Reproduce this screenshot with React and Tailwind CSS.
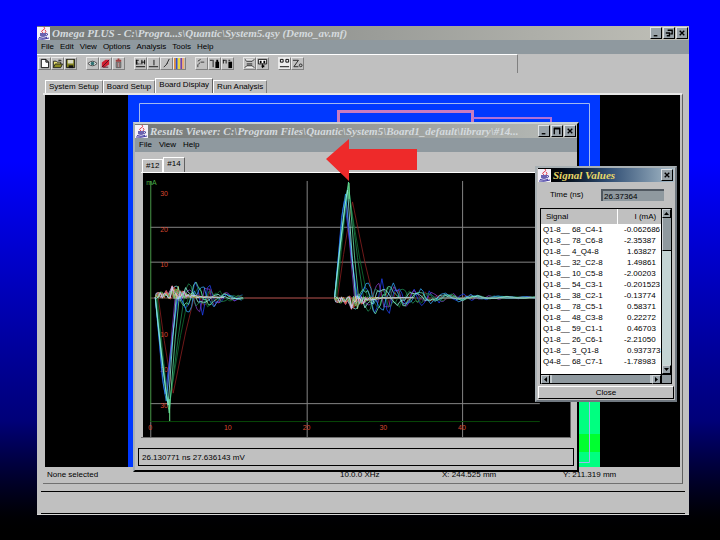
import { useState } from "react";
import clsx from "clsx";

const MENUS = ["File", "Edit", "View", "Options", "Analysis", "Tools", "Help"];
const TABS = ["System Setup", "Board Setup", "Board Display", "Run Analysis"];

const SIGNALS = [
  ["Q1-8__ 68_C4-1", "-0.062686"],
  ["Q1-8__ 78_C6-8", "-2.35387"],
  ["Q1-8__ 4_Q4-8", "1.63827"],
  ["Q1-8__ 32_C2-8", "1.49861"],
  ["Q1-8__ 10_C5-8", "-2.00203"],
  ["Q1-8__ 54_C3-1", "-0.201523"],
  ["Q1-8__ 38_C2-1", "-0.13774"],
  ["Q1-8__ 78_C5-1", "0.58371"],
  ["Q1-8__ 48_C3-8", "0.22272"],
  ["Q1-8__ 59_C1-1", "0.46703"],
  ["Q1-8__ 26_C6-1", "-2.21050"],
  ["Q1-8__ 3_Q1-8", "0.937373"],
  ["Q4-8__ 68_C7-1", "-1.78983"],
];

// icon drawings, each on a 12 x 12 grid
const TOOL_GROUPS = [
  [
    {
      name: "New",
      art: <path d="M2.5 1.5h5l3 3v6h-8zM7.5 1.5v3h3" fill="#fff" stroke="#000" />,
    },
    {
      name: "Open",
      art: (
        <>
          <path d="M1.5 10.5v-7h3l1 1h4v2" fill="#e8e070" stroke="#222" />
          <path d="M1.5 10.5l2-4h8l-2 4z" fill="#8a8a20" stroke="#222" />
          <path d="M7 2.5h2.5l1 1" fill="none" stroke="#000" />
        </>
      ),
    },
    {
      name: "Save",
      art: (
        <>
          <path d="M1.5 1.5h9v9h-9z" fill="#808020" stroke="#111" />
          <path d="M3 2h6v4H3z" fill="#d8d8c0" />
          <path d="M4 8h5v3H4z" fill="#111" />
        </>
      ),
    },
  ],
  [
    {
      name: "Inspect",
      art: (
        <>
          <path d="M1 6q5-5 10 0q-5 5-10 0z" fill="#dfe5e5" stroke="#444" />
          <circle cx="6" cy="6" r="2" fill="#307070" />
        </>
      ),
    },
    {
      name: "Edit net",
      art: (
        <>
          <path d="M2 5l4-3h4v5l-5 3H2z" fill="#d02030" />
          <path d="M2 10l8-8M3 10h6" stroke="#501020" />
        </>
      ),
    },
    {
      name: "Delete",
      art: (
        <>
          <path d="M3.5 4.5h5v6h-5z" fill="#a8a8a8" stroke="#555" />
          <path d="M3 3h6M5 1.5h2" stroke="#a04040" strokeWidth="2" />
          <path d="M5 5v5M7 5v5" stroke="#906060" />
        </>
      ),
    },
  ],
  [
    {
      name: "Fields",
      art: (
        <path d="M1.5 2v5M1 2.5h3M1 4.5h2M1 6.5h3M7.5 2v5M10.5 2v5M7 4.5h4M5 6.5h1M1 9.5h10" stroke="#000" />
      ),
    },
    { name: "Ground", art: <path d="M6.5 2v6M1 9.5h10" stroke="#111" /> },
    { name: "Probe", art: <path d="M3 10l3-3 3-6M6 7l1-1" stroke="#222" fill="none" /> },
    {
      name: "Spectrum",
      art: (
        <>
          <rect x="0" y="0" width="2" height="12" fill="#e09040" />
          <rect x="2" y="0" width="2" height="12" fill="#3050d0" />
          <rect x="4" y="0" width="3" height="12" fill="#e8d840" />
          <rect x="7" y="0" width="2" height="12" fill="#7040b0" />
          <rect x="9" y="0" width="2" height="12" fill="#f0b070" />
        </>
      ),
    },
  ],
  [
    { name: "Route", art: <path d="M2 3.5l3-2M2 10v-3M5 4.5h4M3 7l1-2" stroke="#333" fill="none" /> },
    {
      name: "Driver",
      art: (
        <>
          <path d="M1 2.5h3M4.5 2v8" stroke="#111" />
          <path d="M7 4h4v7H7zM8 2h2v2H8z" fill="#000" />
        </>
      ),
    },
    {
      name: "Receiver",
      art: (
        <>
          <path d="M1 2.5h3M4.5 2v4M1.5 2v4M7 2.5h2" stroke="#111" />
          <path d="M7 4h4v7H7z" fill="#000" />
        </>
      ),
    },
  ],
  [
    {
      name: "Layers",
      art: <path d="M1 1.5l2 2h6l2-2M3 6.5h6M1 10.5l2-2h6l2 2" stroke="#111" fill="#fff" />,
    },
    {
      name: "Connector",
      art: (
        <>
          <path d="M1.5 1.5h9v5h-9zM6 6v5" stroke="#111" fill="#fff" />
          <path d="M3 3h2v3H3zM7 3h2v3H7zM5 8h3v2H5z" fill="#000" />
        </>
      ),
    },
  ],
  [
    {
      name: "Pins",
      art: (
        <>
          <path d="M0 0h12v12H0z" fill="#eee" />
          <path d="M1.5 1.5h3v3h-3zM7.5 1.5h3v3h-3zM1 9.5h10" stroke="#000" fill="none" />
        </>
      ),
    },
    {
      name: "Impedance",
      art: (
        <>
          <path d="M1 2.5h6l-5 7h5" stroke="#222" fill="none" />
          <circle cx="9.5" cy="8" r="1.5" stroke="#222" fill="none" />
        </>
      ),
    },
  ],
];

function JavaIcon() {
  return (
    <svg viewBox="0 0 13 13" className="size-[13px] shrink-0" aria-hidden="true">
      <path d="M0 0h13v13H0z" fill="#f4f2fa" />
      <path d="M6 6q-3-2 0-3t1-3M8 6q2-2 0-3" stroke="#e04050" fill="none" />
      <path d="M3 6h6v3q-3 2-6 0z" fill="#6a62b0" />
      <path d="M9 6.5q3 0 1 2l-1 .5" stroke="#5048a0" fill="none" />
      <path d="M2 10.5q4 1.5 8 0M1 12q5 1 11-1" stroke="#4038a0" fill="none" />
    </svg>
  );
}

const CONTROL_ART = {
  Minimize: "M3 8.5h4",
  Restore: "M4 2.5h5v4H7M2 5.5h4v3H3",
  Maximize: "M2.5 9V3h6v6M2 2.5h7",
  Close: "M3 3l5 5M8 3l-5 5",
};

function WindowButton({ name }) {
  return (
    <button
      aria-label={name}
      className="size-[12px] border border-t-[#dfe3e6] border-l-[#dfe3e6] border-r-black border-b-black bg-[#98a2a8]"
    >
      <svg viewBox="0 0 11 11" className="block size-[10px]">
        <path d={CONTROL_ART[name]} fill="none" stroke="#000" strokeWidth="1.5" />
      </svg>
    </button>
  );
}

function TitleBar({ title, controls, className }) {
  return (
    <header className={clsx("flex h-[14px] shrink-0 items-center pr-px", className)}>
      <JavaIcon />
      <h1 className="min-w-0 flex-1 overflow-hidden pl-[2px] font-['Liberation_Serif'] text-[11px] leading-[14px] font-bold whitespace-nowrap italic">
        {title}
      </h1>
      <div className="flex gap-px">
        {controls.map((c) => (
          <WindowButton key={c} name={c} />
        ))}
      </div>
    </header>
  );
}

function MenuBar({ items, className }) {
  return (
    <nav className={clsx("flex h-[14px] shrink-0 items-center bg-[#8f999f] pl-[4px]", className)}>
      {items.map((m) => (
        <button key={m}>{m}</button>
      ))}
    </nav>
  );
}

function Toolbar() {
  return (
    <div className="flex h-[19px] shrink-0">
      <div className="flex w-[481px] gap-[9px] border-t border-r border-t-white border-r-[#808080] pt-[2px] pl-px">
        {TOOL_GROUPS.map((group, i) => (
          <div key={i} className="flex">
            {group.map((t) => (
              <button
                key={t.name}
                aria-label={t.name}
                className="size-[13px] border border-t-[#e8e8e8] border-l-[#e8e8e8] border-r-[#808080] border-b-[#808080]"
              >
                <svg viewBox="0 0 12 12" className="block size-[11px]" fill="none">
                  {t.art}
                </svg>
              </button>
            ))}
          </div>
        ))}
      </div>
    </div>
  );
}

function BoardCanvas() {
  return (
    <svg viewBox="45 95 635 372" className="block min-h-0 w-full flex-1 bg-black">
      <path d="M128 95h472v372H128z" fill="#0038ff" />
      <path d="M560 380h40v87h-40z" fill="#00ff80" />
      <path d="M560 434h40v18h-40z" fill="#00ff30" />
      <path d="M139.5 462.5v-359h450v359h-20" fill="none" stroke="#a0b8f0" />
      <path d="M338.5 130v-18.5h134V130" fill="none" stroke="#c87cc0" strokeWidth="3" />
      <path d="M473 118h78v5" fill="none" stroke="#b070d8" strokeWidth="2" />
    </svg>
  );
}

// [colour, start, peak, end, height, ringing, ringing delay]
const PULSES = [
  ["#8a2020", 4, 19, 40, 96, 11, 12],
  ["#2040f0", 1, 11, 24, 97, 20, 22],
  ["#8038c0", 1, 13, 21, 94, 16, 30],
  ["#107030", 3, 15, 34, 106, 12, 18],
  ["#208850", 2, 15, 30, 112, 15, 10],
  ["#30a0f0", 1, 12, 23, 104, 20, 20],
  ["#60e0a0", 1, 15, 25, 116, 17, 15],
  ["#90f0e0", 1, 14, 22, 108, 14, 8],
];
const CROSSTALK = ["#e0e060", "#f08040", "#e0a0e0", "#70e0e0", "#f0e8b0", "#d04040", "#60d060", "#c0c0ff"];
const ZERO = 298;

// repeatable noise between -1 and 1
function noise(a, b) {
  const n = Math.sin(a * 12.9898 + b * 78.233) * 43758.5453;
  return (n - Math.floor(n)) * 2 - 1;
}

function pulsePath(x0, sign, [, start, peak, end, height, ring, delay], index, length) {
  const knee = peak + (end - peak) * 0.6;
  let d = `M${x0 + start} ${ZERO}`;
  d += `L${x0 + start + (peak - start) * 0.4} ${ZERO - sign * height * 0.45}`;
  d += `L${x0 + peak - 3} ${ZERO - sign * height * 0.83}`;
  d += `L${x0 + peak} ${ZERO - sign * height}`;
  d += `L${x0 + knee} ${ZERO - sign * height * 0.36}`;
  d += `L${x0 + end} ${ZERO}`;
  for (let t = 2; end + t < length; t += 2.5) {
    const swell = Math.min(1, (t + 4) / delay) * Math.exp(-Math.max(0, t - delay) / (length * 0.24));
    const wave = Math.sin(t / (2.2 + index * 0.4) + index * 1.7) + noise(index, t) * 0.45;
    d += `L${x0 + end + t} ${(ZERO + sign * ring * 0.8 * swell * wave).toFixed(1)}`;
  }
  return d;
}

function crosstalkPath(x0, sign, index, length) {
  let d = `M${x0} ${ZERO}`;
  for (let t = 1; t < length; t += 2) {
    const swell = 3 + 4 * Math.exp(-(((t - 20) / 7) ** 2));
    const level = swell * Math.exp(-Math.max(0, t - 28) / 12);
    const y = level * (0.75 + 1.1 * noise(index + 3, t));
    d += `L${x0 + t} ${(ZERO - sign * y).toFixed(1)}`;
  }
  return d;
}

function WaveChart() {
  return (
    <svg
      viewBox="143 173 428 265"
      className="block min-h-0 w-full flex-1 bg-black font-['Liberation_Sans'] text-[7px]"
      fill="none"
    >
      <path d="M150 227.5h391M150 262.5h391M150 404.5h391M307.5 181v257M463.5 181v257M150.5 422v16" stroke="#858585" />
      <path d="M150 298.5h391" stroke="#806058" />
      <path d="M150 422.5h391" stroke="#084808" />
      <path d="M150.5 181v241" stroke="#489848" />
      <g fill="#d84830">
        <text x="160" y="196">30</text>
        <text x="160" y="232">20</text>
        <text x="160" y="267">10</text>
        <text x="160" y="338">10</text>
        <text x="160" y="373">20</text>
        <text x="160" y="409">30</text>
        <text x="148" y="431">0</text>
        <text x="224" y="431">10</text>
        <text x="303" y="431">20</text>
        <text x="380" y="431">30</text>
        <text x="459" y="431">40</text>
      </g>
      <text x="146" y="185" fill="#48b048">mA</text>
      <g strokeWidth="0.8">
        {PULSES.map((p, i) => (
          <g key={i} stroke={p[0]}>
            <path d={pulsePath(154, -1, p, i, 90)} />
            <path d={pulsePath(334, 1, p, i, 207)} />
          </g>
        ))}
        {CROSSTALK.map((c, i) => (
          <g key={c} stroke={c}>
            <path d={crosstalkPath(155, 1, i, 70)} />
            <path d={crosstalkPath(335, -1, i, 80)} />
          </g>
        ))}
      </g>
      <path d="M169.5 400v22M349.5 183v16" stroke="#70e890" />
      <path d="M245 298.5h89" stroke="#802828" />
      <path d="M440 298.5h101" stroke="#90b0a8" />
    </svg>
  );
}

function ResultsWindow() {
  const [tab, setTab] = useState("#14");
  return (
    <section className="absolute top-[122px] right-[141px] bottom-[68px] left-[133px] flex flex-col border-2 border-t-[#c8d0d4] border-r-black border-b-black border-l-[#a8b0b4] bg-[#c0c0c0]">
      <TitleBar
        title="Results Viewer: C:\Program Files\Quantic\System5\Board1_default\library\#14..."
        controls={["Minimize", "Maximize", "Close"]}
        className="bg-linear-to-r from-[#747878] to-[#b8bcb8] text-[#d4dade]"
      />
      <MenuBar items={["File", "View", "Help"]} className="gap-[7px]" />
      <div role="tablist" className="mt-[5px] flex h-[15px] shrink-0 items-end pl-[7px]">
        {["#12", "#14"].map((t) => (
          <button
            key={t}
            role="tab"
            aria-selected={tab === t}
            onClick={() => setTab(t)}
            className={clsx(
              "border-t border-r border-l border-t-white border-l-white px-[3px]",
              tab === t ? "h-[15px] border-r-[#606060] pb-[3px]" : "h-[13px] border-r-white"
            )}
          >
            {t}
          </button>
        ))}
      </div>
      <div className="mr-[6px] ml-[6px] flex min-h-0 flex-1 flex-col border-t border-r border-b border-t-white border-r-[#606060] border-b-[#707070] pl-[2px]">
        <WaveChart />
      </div>
      <p className="mx-[3px] mt-[10px] mb-[4px] h-[18px] shrink-0 border border-black px-[3px] leading-[17px]">
        26.130771 ns 27.636143 mV
      </p>
    </section>
  );
}

function ScrollButton({ label, children }) {
  return (
    <button
      aria-label={label}
      className="flex size-[9px] shrink-0 items-center justify-center border border-t-[#d0d4d8] border-l-[#d0d4d8] border-r-black border-b-black bg-[#98a2a8]"
    >
      <svg viewBox="0 0 5 5" className="size-[5px]">
        {children}
      </svg>
    </button>
  );
}

function SignalWindow() {
  const [time, setTime] = useState("26.37364");
  return (
    <section className="absolute top-[166px] right-[43px] flex w-[142px] flex-col border-2 border-t-[#a8b0b4] border-r-[#707880] border-b-[#707880] border-l-[#a8b0b4] bg-[#c0c0c0] px-px pb-px">
      <TitleBar
        title="Signal Values"
        controls={["Close"]}
        className="bg-linear-to-r from-black via-[#2c4a70] to-[#a8bcc8] text-[#e8d868]"
      />
      <div className="flex h-[26px] items-center justify-between pr-[10px] pl-[12px]">
        <label htmlFor="time">Time (ns)</label>
        <input
          id="time"
          value={time}
          onChange={(e) => setTime(e.target.value)}
          className="h-[12px] w-[63px] border-t-2 border-l-2 border-[#505860] bg-[#8f999f] px-px text-[8px] leading-[10px]"
        />
      </div>

      <div className="mx-[2px] flex border border-black">
        <div className="min-w-0 flex-1">
          <div className="h-[165px] border-r border-black bg-white">
            <table className="w-full table-fixed border-collapse text-left leading-[11px] whitespace-nowrap">
              <thead className="bg-[#c0c0c0]">
                <tr className="h-[15px]">
                  <th className="w-[76px] border-r border-white pl-[5px] font-normal">Signal</th>
                  <th className="pl-[17px] font-normal">I (mA)</th>
                </tr>
              </thead>
              <tbody>
                {SIGNALS.map(([name, value]) => (
                  <tr key={name} className="h-[11px]">
                    <td className="pl-[2px]">{name}</td>
                    <td className={value[0] === "-" ? "pl-[7px]" : "pl-[10px]"}>{value}</td>
                  </tr>
                ))}
              </tbody>
            </table>
          </div>
          <div className="flex h-[9px] border-t border-r border-black bg-[#8f999f]">
            <ScrollButton label="Scroll left">
              <path d="M4 0v5L1 2.5z" />
            </ScrollButton>
            <div className="flex-1 border-x-2 border-[#c0c8cc]" />
            <ScrollButton label="Scroll right">
              <path d="M1 0v5l3-2.5z" />
            </ScrollButton>
          </div>
        </div>
        <div className="flex w-[9px] flex-col bg-[#c4d4d4]">
          <ScrollButton label="Scroll up">
            <path d="M0 4h5L2.5 1z" />
          </ScrollButton>
          <div className="h-[33px] border-b border-l border-b-black border-l-[#d0d4d8] bg-[#8f999f]" />
          <div className="flex-1" />
          <ScrollButton label="Scroll down">
            <path d="M0 1h5L2.5 4z" />
          </ScrollButton>
          <div className="h-[9px] border-t border-black bg-[#8f999f]" />
        </div>
      </div>

      <button className="mt-[2px] h-[13px] border border-t-white border-l-white border-r-black border-b-black leading-[11px]">
        Close
      </button>
    </section>
  );
}

export default function App() {
  const [tab, setTab] = useState("Board Display");

  return (
    <main className="relative flex h-screen flex-col bg-linear-to-b from-[#0000ff] from-30% via-[#000078] via-78% to-black pt-[26px] pr-[31px] pb-[25px] pl-[37px] font-['Liberation_Sans',sans-serif] text-[8px] leading-[10px] text-black">
      <div className="flex min-h-0 flex-1 flex-col border-b border-[#d8d8d8] bg-[#c0c0c0]">
        <TitleBar
          title="Omega PLUS - C:\Progra...s\Quantic\System5.qsy (Demo_av.mf)"
          controls={["Minimize", "Restore", "Close"]}
          className="bg-linear-to-r from-[#747878] to-[#c0c0b8] text-[#d4dade]"
        />
        <MenuBar items={MENUS} className="gap-[6px]" />
        <Toolbar />

        <div role="tablist" className="mt-[5px] flex h-[15px] shrink-0 items-end pl-[8px]">
          {TABS.map((t) => (
            <button
              key={t}
              role="tab"
              aria-selected={tab === t}
              onClick={() => setTab(t)}
              className={clsx(
                "border-t border-r border-l border-t-white border-l-white px-[3px]",
                tab === t ? "h-[15px] border-r-[#606060] pb-[3px]" : "h-[13px] border-r-[#808080]"
              )}
            >
              {t}
            </button>
          ))}
        </div>

        <div className="mr-[6px] ml-[6px] flex min-h-0 flex-1 flex-col border-t-2 border-r border-b border-t-[#e8e8e8] border-r-[#606060] border-b-[#707070]">
          <div className="mr-[2px] ml-[2px] flex min-h-0 flex-1 flex-col">
            <BoardCanvas />
          </div>
          <div className="grid h-[16px] shrink-0 grid-cols-[293px_102px_121px_1fr] items-center pl-[4px]">
            <span>None selected</span>
            <span>10.0.0 XHz</span>
            <span>X: 244.525 mm</span>
            <span>Y: 211.319 mm</span>
          </div>
        </div>

        <footer className="mx-[4px] mt-[7px] h-[23px] shrink-0 border-y border-black" />
      </div>

      <ResultsWindow />
      <SignalWindow />

      <svg viewBox="0 0 92 42" className="absolute top-[139px] left-[326px] w-[92px]" aria-hidden="true">
        <path d="M0 20L23 0v10h68v21H23v11z" fill="#ee2a2a" />
      </svg>
    </main>
  );
}
